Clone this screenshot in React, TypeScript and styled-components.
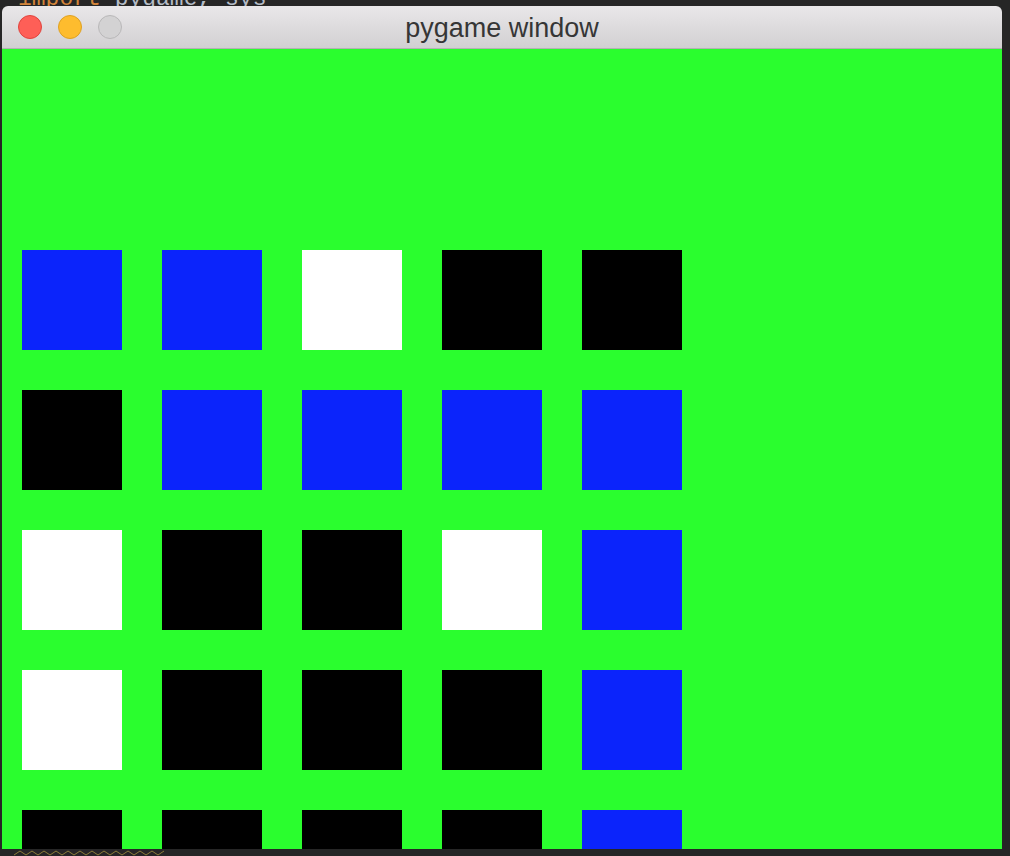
import React from "react";
import styled, { createGlobalStyle } from "styled-components";

const Global = createGlobalStyle`
  html, body { margin: 0; padding: 0; background: #272727; }
  body { width: 1010px; height: 856px; overflow: hidden; }
`;

const Desktop = styled.div`
  position: relative;
  width: 1010px;
  height: 856px;
  background: #262626;
  overflow: hidden;
`;

const CodeLine = styled.div`
  position: absolute;
  left: 18px;
  top: -13px;
  font-family: "Liberation Mono", monospace;
  font-size: 23px;
  line-height: 24px;
  white-space: pre;
  color: #b4bcc6;
`;

const Keyword = styled.span`
  color: #d2843a;
`;

const Squiggle = styled.svg`
  position: absolute;
  left: 14px;
  top: 850px;
`;

const Window = styled.div`
  position: absolute;
  left: 2px;
  top: 6px;
  width: 1000px;
  display: flex;
  flex-direction: column;
  border-radius: 6px 6px 0 0;
  overflow: hidden;
`;

const TitleBar = styled.div`
  position: relative;
  height: 42px;
  display: flex;
  align-items: center;
  justify-content: center;
  background: linear-gradient(#e9e7e9, #d2d0d2);
  border-bottom: 1px solid #b3b1b3;
`;

const Lights = styled.div`
  position: absolute;
  left: 16px;
  top: 9px;
  display: flex;
  gap: 16px;
`;

const Light = styled.span<{ $fill: string; $edge: string }>`
  width: 24px;
  height: 24px;
  box-sizing: border-box;
  border-radius: 50%;
  background: ${(p) => p.$fill};
  border: 1px solid ${(p) => p.$edge};
`;

const Title = styled.div`
  font-family: "Liberation Sans", Arial, sans-serif;
  font-size: 27px;
  color: #363636;
  padding-top: 2px;
`;

const Canvas = styled.div`
  height: 800px;
  background: #2afe2e;
  overflow: hidden;
  box-sizing: border-box;
  padding: 201px 0 0 20px;
`;

const Grid = styled.div`
  display: grid;
  grid-template-columns: repeat(5, 100px);
  grid-auto-rows: 100px;
  gap: 40px;
`;

const Cell = styled.div<{ $color: string }>`
  background: ${(p) => p.$color};
`;

const C: Record<string, string> = {
  B: "#0b24fb",
  K: "#000000",
  W: "#ffffff",
};

const rows = [
  "BBWKK",
  "KBBBB",
  "WKKWB",
  "WKKKB",
  "KKKKB",
];

export default function App() {
  const zig = Array.from({ length: 26 }, (_, i) => `${i * 6},${i % 2 === 0 ? 5 : 1}`).join(" ");
  return (
    <>
      <Global />
      <Desktop>
        <CodeLine>
          <Keyword>import</Keyword> pygame, sys
        </CodeLine>
        <Squiggle width="160" height="6" viewBox="0 0 160 6">
          <polyline points={zig} fill="none" stroke="#8a7d3a" strokeWidth="1" />
        </Squiggle>
        <Window>
          <TitleBar>
            <Lights>
              <Light $fill="#fe5f57" $edge="#e0443e" />
              <Light $fill="#febc2e" $edge="#dea123" />
              <Light $fill="#d3d2d3" $edge="#b9b8b9" />
            </Lights>
            <Title>pygame window</Title>
          </TitleBar>
          <Canvas>
            <Grid>
              {rows.flatMap((r, ri) =>
                r.split("").map((ch, ci) => <Cell key={`${ri}-${ci}`} $color={C[ch]} />)
              )}
            </Grid>
          </Canvas>
        </Window>
      </Desktop>
    </>
  );
}
